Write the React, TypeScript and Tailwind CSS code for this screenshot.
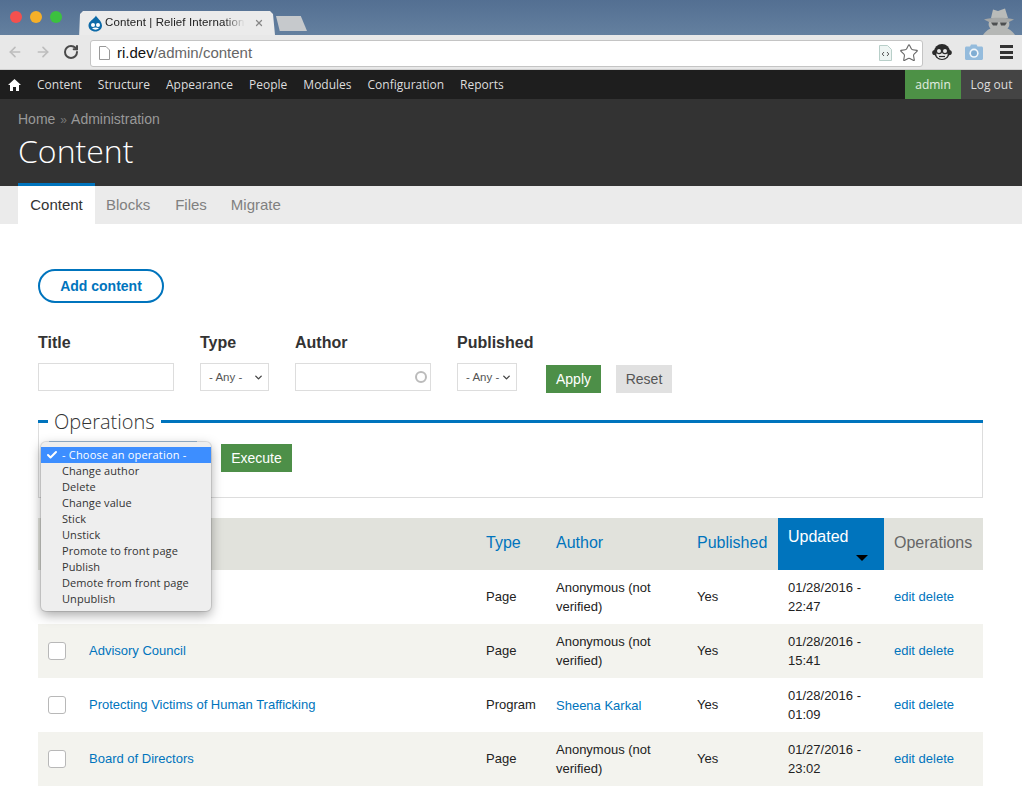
import { ArrowLeft, ArrowRight, Check, ChevronDown, RotateCw, Star, X } from "lucide-react";

const navItems = ["Content", "Structure", "Appearance", "People", "Modules", "Configuration", "Reports"];
const ops = ["Change author", "Delete", "Change value", "Stick", "Unstick", "Promote to front page", "Publish", "Demote from front page", "Unpublish"];

type Row = { title: string; type: string; author: string; authorLink?: boolean; date: string; time: string };
const rows: Row[] = [
  { title: "", type: "Page", author: "Anonymous (not verified)", date: "01/28/2016 -", time: "22:47" },
  { title: "Advisory Council", type: "Page", author: "Anonymous (not verified)", date: "01/28/2016 -", time: "15:41" },
  { title: "Protecting Victims of Human Trafficking", type: "Program", author: "Sheena Karkal", authorLink: true, date: "01/28/2016 -", time: "01:09" },
  { title: "Board of Directors", type: "Page", author: "Anonymous (not verified)", date: "01/27/2016 -", time: "23:02" },
];

function DrupalIcon() {
  return (
    <svg width="15" height="17" viewBox="0 0 15 17" className="shrink-0">
      <path d="M8 0.5C8.5 3 13.5 5 14 10.5C14 14 11 16.5 7.5 16.5C3.5 16.5 0.5 14 0.5 10.5C0.5 6 6 4.5 8 0.5Z" fill="#0d6aa8" />
      <circle cx="5" cy="10" r="2" fill="#fff" />
      <circle cx="10" cy="10" r="2" fill="#fff" />
      <path d="M4 13.5C6 12 9 12 11 13.5C9 15 6 15 4 13.5Z" fill="#fff" />
    </svg>
  );
}

function SpyIcon() {
  return (
    <svg width="32" height="27" viewBox="0 0 32 27">
      <path d="M8 10L10 1.5L15 3L22 0.5L25 10Z" fill="#b9bbb9" />
      <path d="M1 11.5C8 9 24 9 31 11.5L26 14H6Z" fill="#a5a7a6" />
      <path d="M6 14H26C27 17 26 19 24.5 20.5C28 22 30.5 24.5 32 27H0C1.5 24.5 4 22 7.5 20.5C6 19 5 17 6 14Z" fill="#b5b7b5" />
      <path d="M8 14.5H15L14 17.5H10ZM17 14.5H24L22 17.5H18Z" fill="#4d4f50" />
    </svg>
  );
}

function MonkeyIcon() {
  return (
    <svg width="20" height="20" viewBox="0 0 20 20">
      <circle cx="2.8" cy="10.5" r="2.6" fill="#2b2b2b" />
      <circle cx="17.2" cy="10.5" r="2.6" fill="#2b2b2b" />
      <circle cx="10" cy="10" r="8" fill="#2b2b2b" />
      <ellipse cx="10" cy="12.5" rx="5.6" ry="4.4" fill="#e8e8e8" />
      <circle cx="7" cy="9" r="2.6" fill="#e8e8e8" stroke="#2b2b2b" strokeWidth="1.2" />
      <circle cx="13" cy="9" r="2.6" fill="#e8e8e8" stroke="#2b2b2b" strokeWidth="1.2" />
      <path d="M7 14.5H13" stroke="#2b2b2b" strokeWidth="1.2" />
    </svg>
  );
}

function CameraIcon() {
  return (
    <svg width="18" height="16" viewBox="0 0 18 16">
      <path d="M1.5 2.5H5L6 0.5H11.5L12.5 2.5H16.5C17.3 2.5 18 3.2 18 4V14.5C18 15.3 17.3 16 16.5 16H1.5C0.7 16 0 15.3 0 14.5V4C0 3.2 0.7 2.5 1.5 2.5Z" fill="#94bbdc" />
      <circle cx="9" cy="9.2" r="4.6" fill="#f2f6fa" />
      <circle cx="9" cy="9.2" r="3" fill="#80add3" />
    </svg>
  );
}

function HomeIcon() {
  return (
    <svg width="13" height="12" viewBox="0 0 13 12" fill="#fff">
      <path d="M6.5 0L13 6H11V12H8V8H5V12H2V6H0Z" />
    </svg>
  );
}

function FileCodeIcon() {
  return (
    <svg width="13" height="16" viewBox="0 0 13 16">
      <path d="M0.5 0.5H8.5L12.5 4.5V15.5H0.5Z" fill="#eef5f3" stroke="#b8cfc9" />
      <path d="M5 7L3.2 9L5 11M8 7L9.8 9L8 11" fill="none" stroke="#555" />
    </svg>
  );
}

function BrowserChrome() {
  return (
    <div className="font-['Liberation_Sans',sans-serif]">
      <div className="h-[35px] flex items-end bg-gradient-to-b from-[#536f92] to-[#64809f] relative">
        <div className="flex gap-[8px] ml-[10px] mb-[12px]">
          <span className="w-[12px] h-[12px] rounded-full bg-[#f4504e]" />
          <span className="w-[12px] h-[12px] rounded-full bg-[#f6b029]" />
          <span className="w-[12px] h-[12px] rounded-full bg-[#3cc13f]" />
        </div>
        <div className="ml-[11px] w-[205px] h-[24px] bg-[#ebebeb] [clip-path:polygon(0_100%,3%_100%,7px_3px,10px_0,197px_0,200px_3px,202px_100%,100%_100%)] flex items-center pl-[15px] gap-[2px] text-[11.5px] tracking-[0.1px] text-[#222]">
          <DrupalIcon />
          <span className="w-[140px] overflow-hidden whitespace-nowrap [mask-image:linear-gradient(to_right,black_85%,transparent)]">Content | Relief International</span>
          <X size={10} strokeWidth={3} className="ml-[7px] text-[#888] shrink-0" />
        </div>
        <div className="-ml-[2px] mb-[4px] w-[31px] h-[15px] bg-[#c6c9cc] [clip-path:polygon(0_0,80%_0,100%_100%,12%_100%)]" />
        <div className="absolute right-[7px] bottom-0 flex">
          <SpyIcon />
        </div>
      </div>
      <div className="h-[35px] bg-[#e8e8e8] flex items-center border-b border-[#cfcfcf]">
        <ArrowLeft size={16} strokeWidth={2.5} className="ml-[7px] text-[#bdbdbd]" />
        <ArrowRight size={16} strokeWidth={2.5} className="ml-[12px] text-[#bdbdbd]" />
        <RotateCw size={16} strokeWidth={3} className="ml-[12px] text-[#4a4a4a]" />
        <div className="ml-[11px] mt-[2px] w-[833px] h-[27px] bg-white border border-[#c4c4c4] rounded-[3px] flex items-center pl-[8px] pr-[3px] text-[15px]">
          <svg width="11" height="14" viewBox="0 0 11 14" className="mr-[7px]">
            <path d="M0.5 0.5H7L10.5 4V13.5H0.5Z" fill="#fff" stroke="#999" />
          </svg>
          <span className="text-[#111]">ri.dev</span>
          <span className="text-[#666]">/admin/content</span>
          <span className="ml-auto mr-[7px] flex"><FileCodeIcon /></span>
          <Star size={20} strokeWidth={1.3} className="text-[#666]" />
        </div>
        <span className="ml-[9px] flex"><MonkeyIcon /></span>
        <span className="ml-[13px] flex"><CameraIcon /></span>
        <div className="ml-[17px] flex flex-col gap-[2.5px]">
          <span className="w-[13px] h-[3px] bg-[#333]" />
          <span className="w-[13px] h-[3px] bg-[#333]" />
          <span className="w-[13px] h-[3px] bg-[#333]" />
        </div>
      </div>
    </div>
  );
}

function AdminNav() {
  return (
    <div className="h-[29px] bg-[#1e1e1e] flex items-center font-['Open_Sans',sans-serif] text-[12px] text-[#ddd]">
      <span className="ml-[8px] mr-[16px] flex"><HomeIcon /></span>
      <div className="flex gap-[16px]">
        {navItems.map((n) => (
          <span key={n}>{n}</span>
        ))}
      </div>
      <div className="ml-auto flex h-full">
        <span className="w-[56px] bg-[#4d9146] text-white/85 flex items-center justify-center">admin</span>
        <span className="w-[61px] bg-[#444] flex items-center justify-center">Log out</span>
      </div>
    </div>
  );
}

function PageHeader() {
  return (
    <div className="font-['Liberation_Sans',sans-serif]">
      <div className="h-[87px] bg-[#333] pl-[18px] pt-[11px]">
        <div className="text-[14px] text-[#999] leading-[18px]">
          Home <span className="text-[#777] text-[12px] mx-[1px]">»</span> Administration
        </div>
        <h1 className="mt-[2px] font-['Open_Sans',sans-serif] font-light text-[32px] leading-[40px] text-white">Content</h1>
      </div>
      <div className="h-[38px] bg-[#ebebeb] pl-[18px] flex text-[15px] text-[#808080]">
        <div className="w-[77px] -mt-[3px] h-[41px] bg-white border-t-[3px] border-[#0074bd] text-[#333] flex items-center justify-center">Content</div>
        <span className="ml-[11px] flex items-center">Blocks</span>
        <span className="ml-[25px] flex items-center">Files</span>
        <span className="ml-[24px] flex items-center">Migrate</span>
      </div>
    </div>
  );
}

function FakeSelect({ w, arrow }: { w: string; arrow: string }) {
  return (
    <div className={`${w} h-[28px] border border-[#ddd] flex items-center pl-[8px] pt-[1px] text-[11.5px] text-[#555]`}>
      - Any -
      <ChevronDown size={11} strokeWidth={3} className={`${arrow} text-[#444]`} />
    </div>
  );
}

function Filters() {
  return (
    <div className="flex mt-[30px] text-[#333]">
      <div className="w-[162px]">
        <div className="font-bold text-[16px] leading-[20px]">Title</div>
        <div className="mt-[10px] w-[136px] h-[28px] border border-[#ddd]" />
      </div>
      <div className="w-[95px]">
        <div className="font-bold text-[16px] leading-[20px]">Type</div>
        <div className="mt-[10px]"><FakeSelect w="w-[69px]" arrow="ml-[11px]" /></div>
      </div>
      <div className="w-[162px]">
        <div className="font-bold text-[16px] leading-[20px]">Author</div>
        <div className="mt-[10px] w-[136px] h-[28px] border border-[#ddd] flex items-center justify-end pr-[3px]">
          <span className="w-[12px] h-[12px] rounded-full border-2 border-[#bbb]" />
        </div>
      </div>
      <div className="w-[89px]">
        <div className="font-bold text-[16px] leading-[20px]">Published</div>
        <div className="mt-[10px]"><FakeSelect w="w-[60px]" arrow="ml-[2px]" /></div>
      </div>
      <div className="flex items-start pt-[32px] gap-[15px] text-[14px]">
        <button className="w-[55px] h-[28px] bg-[#4d8f48] text-white">Apply</button>
        <button className="w-[56px] h-[28px] bg-[#e1e1e1] text-[#555]">Reset</button>
      </div>
    </div>
  );
}

function OperationsBox() {
  return (
    <div className="flow-root mt-[28px] h-[77px] relative border-x border-b border-[#ddd]">
      <div className="flex items-center h-[22px] -mt-[11px] -mx-[1px]">
        <span className="w-[10px] h-[3px] bg-[#0074bd]" />
        <span className="mx-[6px] bg-white pt-[2px] font-['Open_Sans',sans-serif] font-light text-[20px] leading-[22px] text-[#333]">Operations</span>
        <span className="flex-1 h-[3px] bg-[#0074bd]" />
      </div>
      <div className="pl-[182px] pt-[12px]">
        <button className="w-[71px] h-[28px] bg-[#4d8f48] text-white text-[14px]">Execute</button>
      </div>
      <div className="absolute left-[10px] top-[20px] w-[148px] h-[2px] bg-[#a9c8e6]" />
      <div className="absolute left-[2px] top-[21px] w-[170px] h-[169px] rounded-[5px] bg-[#eeeeee] ring-1 ring-black/10 shadow-[0_4px_12px_rgba(0,0,0,0.35)] pt-[5px] font-['Open_Sans',sans-serif] text-[11px] tracking-[0.08px] text-[#333] z-10">
        <div className="h-[16px] bg-[#3d8eff] text-white flex items-center leading-[16px]">
          <Check size={12} strokeWidth={4} className="ml-[5px] mr-[4px]" />
          <span className="tracking-[0.2px]">- Choose an operation -</span>
        </div>
        {ops.map((o) => (
          <div key={o} className="h-[16px] pl-[21px] leading-[16px]">{o}</div>
        ))}
      </div>
    </div>
  );
}

function ContentTable() {
  const th = "px-[10px] pb-[2px] font-normal text-left text-[16px] text-[#0074bd]";
  return (
    <table className="mt-[20px] w-[945px] table-fixed border-collapse text-[13px] text-[#222]">
      <colgroup>
        <col className="w-[41px]" />
        <col className="w-[397px]" />
        <col className="w-[70px]" />
        <col className="w-[141px]" />
        <col className="w-[91px]" />
        <col className="w-[106px]" />
        <col className="w-[99px]" />
      </colgroup>
      <thead>
        <tr className="h-[52px] bg-[#e1e2dc]">
          <th />
          <th />
          <th className={th}>Type</th>
          <th className={th}>Author</th>
          <th className={th}>Published</th>
          <th className="px-[10px] pt-[9px] font-normal text-left text-[16px] text-white bg-[#0074bd] align-top">
            <div className="leading-[20px]">Updated</div>
            <div className="flex justify-end mr-[6px] mt-[8px]">
              <span className="w-0 h-0 border-x-[6px] border-x-transparent border-t-[6px] border-t-black" />
            </div>
          </th>
          <th className="px-[10px] pb-[2px] font-normal text-left text-[16px] text-[#666]">Operations</th>
        </tr>
      </thead>
      <tbody>
        {rows.map((r, i) => (
          <tr key={i} className={`h-[54px] ${i % 2 === 1 ? "bg-[#f3f3ee]" : "bg-white"}`}>
            <td className="pl-[10px]">
              <span className="block w-[18px] h-[18px] rounded-[3px] bg-white border border-[#b8b8b8]" />
            </td>
            <td className="px-[10px] text-[#0074bd]">{r.title}</td>
            <td className="px-[10px]">{r.type}</td>
            <td className={`px-[10px] leading-[19px] ${r.authorLink ? "text-[#0074bd]" : ""}`}>{r.author}</td>
            <td className="px-[10px]">Yes</td>
            <td className="px-[10px] leading-[19px]">{r.date}<br />{r.time}</td>
            <td className="px-[10px] text-[#0074bd]">edit delete</td>
          </tr>
        ))}
      </tbody>
    </table>
  );
}

export default function App() {
  return (
    <div className="w-[1022px] h-[786px] overflow-hidden bg-white font-['Liberation_Sans',sans-serif]">
      <BrowserChrome />
      <AdminNav />
      <PageHeader />
      <div className="pl-[38px] pr-[39px] pt-[45px]">
        <button className="w-[126px] h-[34px] rounded-full border-2 border-[#0074bd] text-[#0074bd] font-bold text-[14px]">Add content</button>
        <Filters />
        <OperationsBox />
        <ContentTable />
      </div>
    </div>
  );
}
